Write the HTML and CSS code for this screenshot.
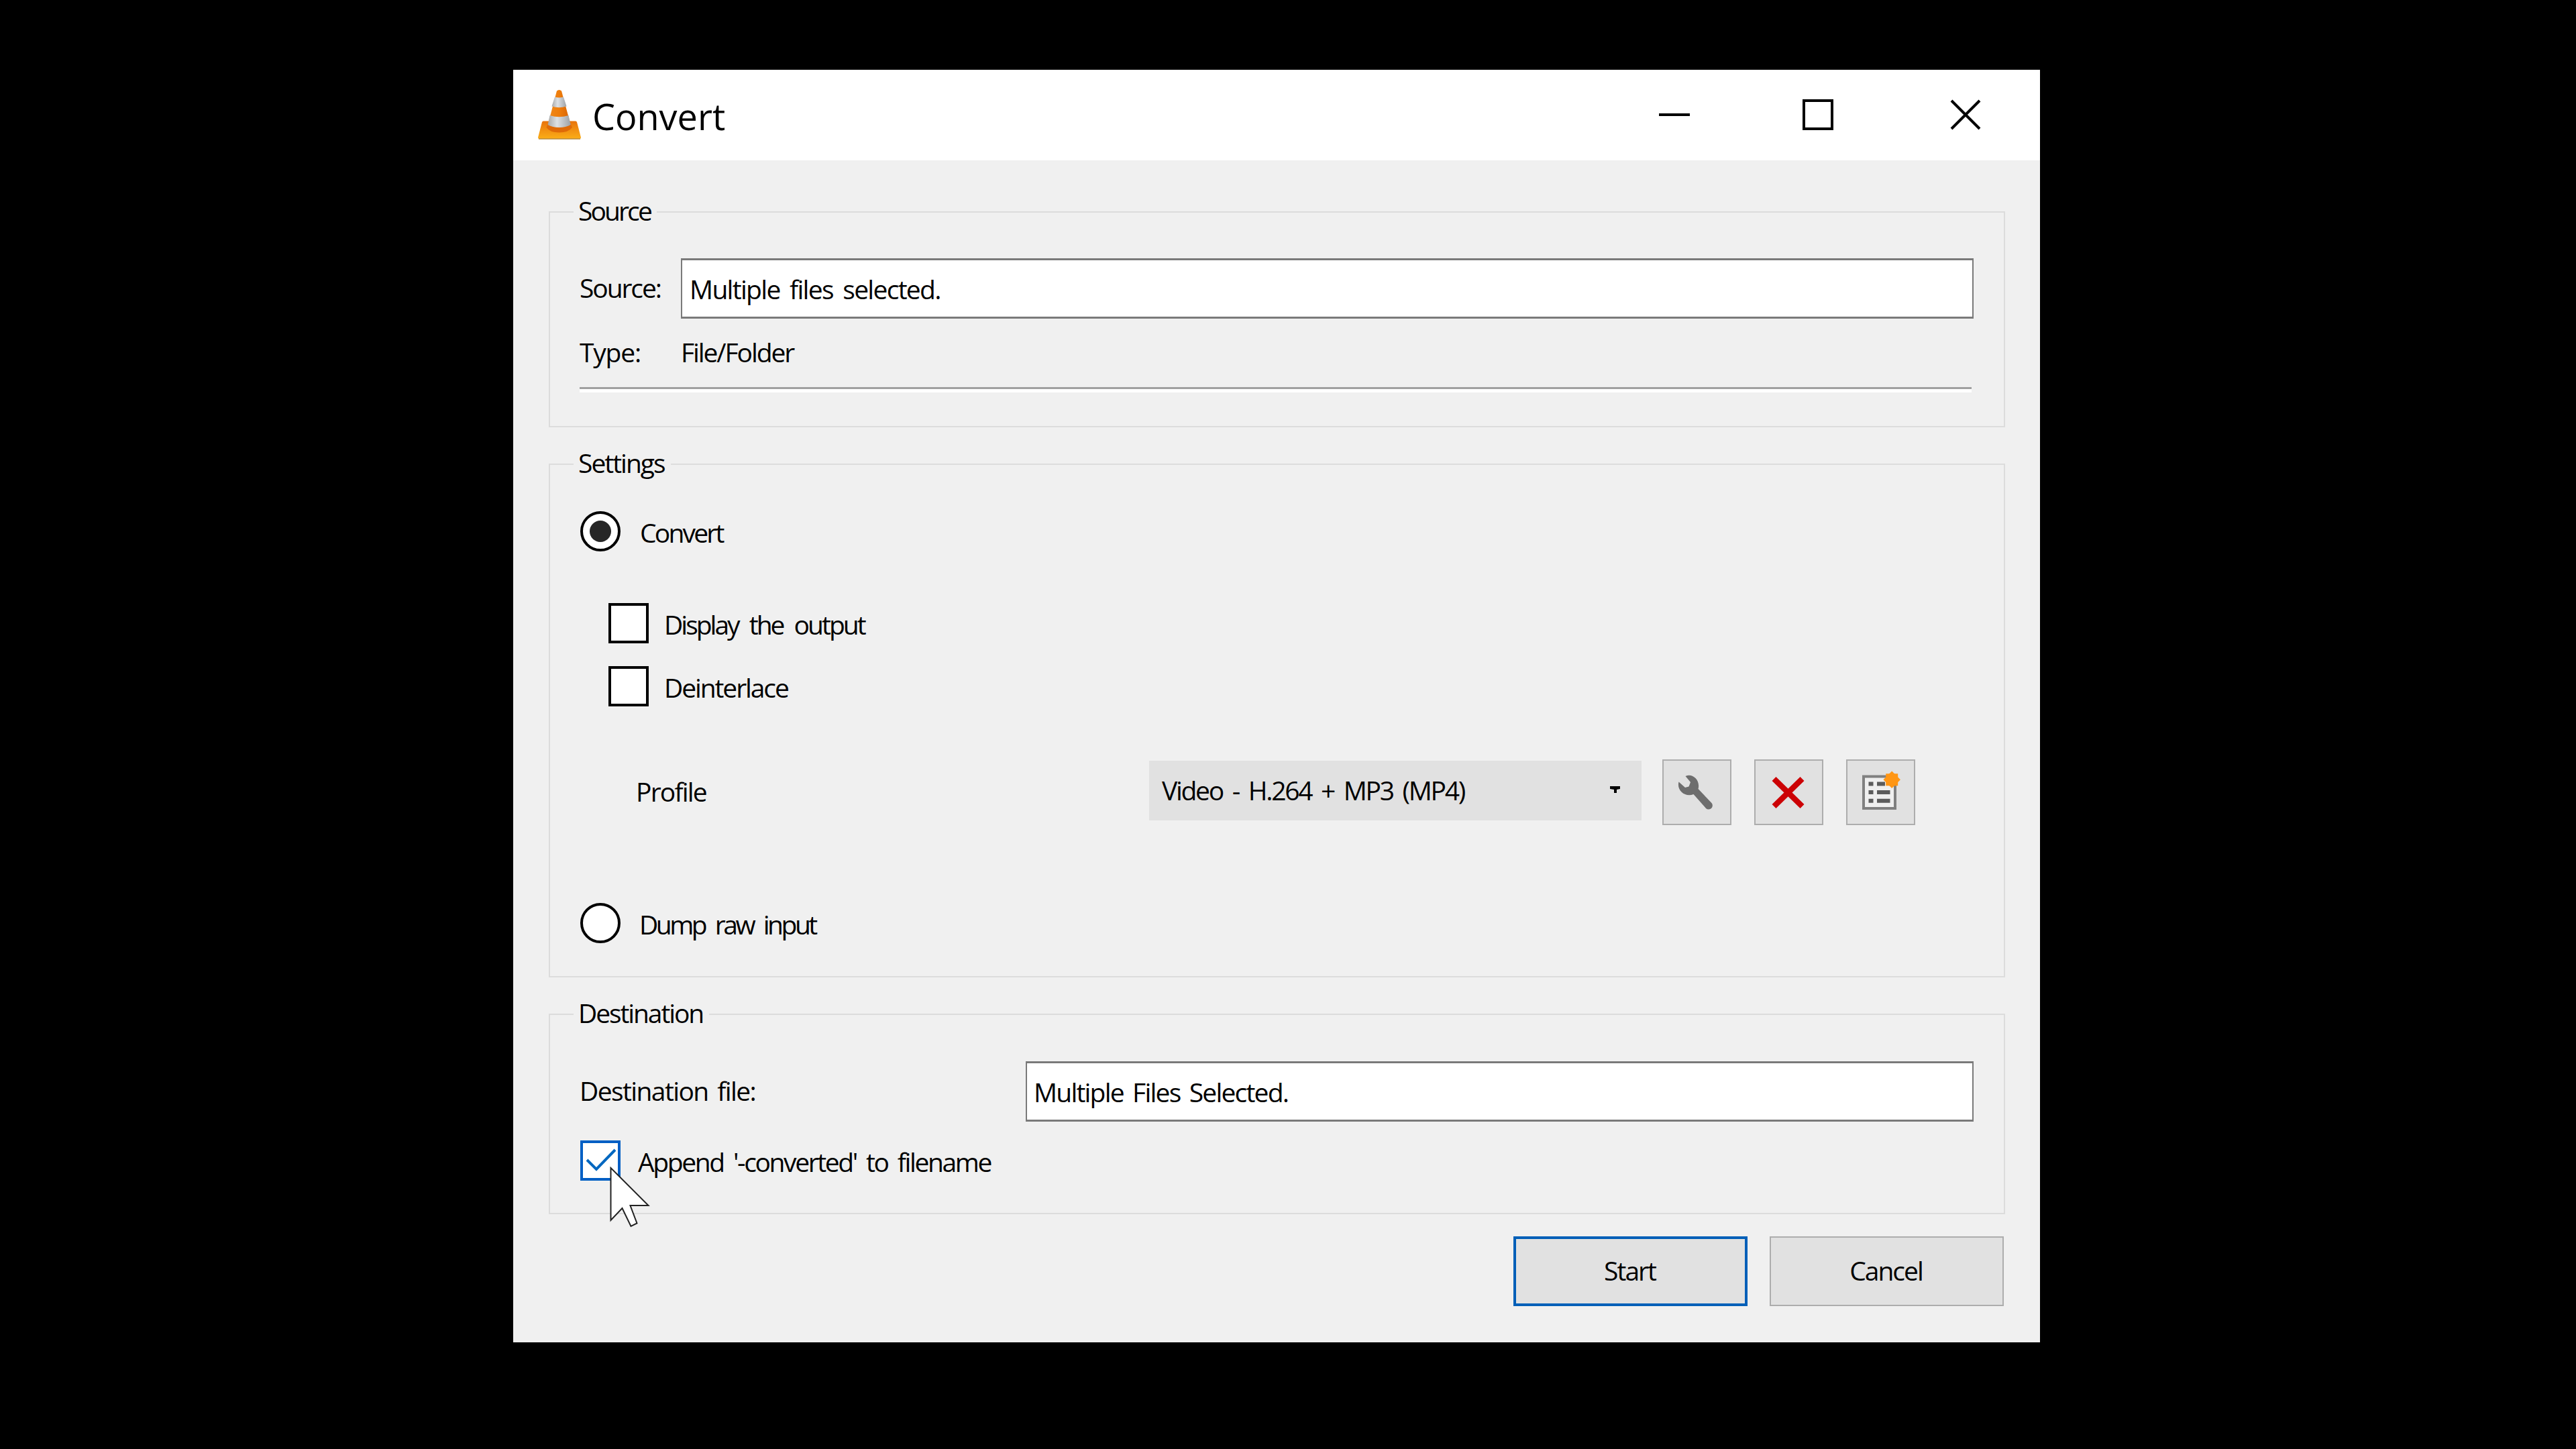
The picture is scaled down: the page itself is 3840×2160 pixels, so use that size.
FILE: index.html
```html
<!DOCTYPE html>
<html lang="en">
  <head>
    <meta charset="UTF-8" />
    <meta name="viewport" content="width=device-width, initial-scale=1.0" />
    <title>Convert</title>
    <link rel="stylesheet" href="styles.css" />
  </head>
  <body>
    <div class="window">
      <header class="titlebar">
        <svg class="app-icon" viewBox="0 0 64 75">
          <defs>
            <linearGradient id="base" x1="0" y1="0" x2="0" y2="1">
              <stop offset="0" stop-color="#e8730c" />
              <stop offset="1" stop-color="#fbae17" />
            </linearGradient>
            <linearGradient id="orange" x1="0" y1="0" x2="1" y2="0">
              <stop offset="0" stop-color="#f08a1c" />
              <stop offset="0.5" stop-color="#ee7d0c" />
              <stop offset="1" stop-color="#d66205" />
            </linearGradient>
            <linearGradient id="white" x1="0" y1="0" x2="1" y2="0">
              <stop offset="0" stop-color="#a8a8a8" />
              <stop offset="0.4" stop-color="#dde1e5" />
              <stop offset="1" stop-color="#9da1a6" />
            </linearGradient>
          </defs>
          <path d="M8 47.500h48q1.500 0 2 1.500l6 23q0 2-2 2H2q-2 0-2-2l6-23q.5-1.500 2-1.500z" fill="url(#base)" />
          <path d="M1 74h62" stroke="#b98a3c" stroke-width="1.500" />
          <path d="M14.700 52L12.500 57q5 7.500 19 7.500t19.500-7.500L48.700 52z" fill="#df6a08" />
          <path d="M28 2.500q3.500-3 7 0L48.700 53q-7 4-17 4t-17-4z" fill="url(#orange)" />
          <path d="M25 11.500q6.500 2 13 0l4.500 14q-11 3.500-22 0z" fill="url(#white)" />
          <path d="M17.500 39q14 4.500 28 0l3.200 14q-7 4-17 4t-17-4z" fill="url(#white)" />
        </svg>
        <h1 class="title">Convert</h1>
        <div class="window-buttons">
          <svg class="window-button" viewBox="0 0 46 46"><path d="M0 23h46" /></svg>
          <svg class="window-button" viewBox="0 0 46 46"><path d="M2 2h42v42H2z" /></svg>
          <svg class="window-button close" viewBox="0 0 46 46"><path d="M2 2l42 42M44 2L2 44" /></svg>
        </div>
      </header>

      <main class="content">
        <section class="group source">
          <h2 class="group-title">Source</h2>
          <div class="field-row">
            <label class="label" for="source">Source:</label>
            <input class="text-input" id="source" type="text" value="Multiple files selected." />
          </div>
          <div class="type-row">
            <span class="label type">Type:</span>
            <span class="type-value">File/Folder</span>
          </div>
          <div class="separator"></div>
        </section>

        <section class="group settings">
          <h2 class="group-title settings-title">Settings</h2>
          <label class="option convert">
            <input class="radio" type="radio" name="mode" checked />
            <span class="option-text">Convert</span>
          </label>
          <label class="option display">
            <input class="checkbox" type="checkbox" />
            <span class="option-text">Display the output</span>
          </label>
          <label class="option deinterlace">
            <input class="checkbox" type="checkbox" />
            <span class="option-text">Deinterlace</span>
          </label>
          <div class="profile-row">
            <span class="profile-label">Profile</span>
            <div class="combo">
              <span class="combo-text">Video - H.264 + MP3 (MP4)</span>
              <svg class="combo-arrow" viewBox="0 0 15 11"><path d="M0 0h15v4l-5 1v5H6V5L0 4z" /></svg>
            </div>
            <button class="icon-button" type="button" aria-label="Edit profile">
              <svg viewBox="2 2 99 94">
                <path fill="#6e6e6e" d="M34.500 25C45 20 57 31 53.500 44L73 64.500a5.500 5.500 0 0 1-8 8.500L46.500 52C34 57 21 46 24.500 33.500L34 42l5.500-1.500L42 34z" />
              </svg>
            </button>
            <button class="icon-button" type="button" aria-label="Delete profile">
              <svg viewBox="2 2 99 94">
                <path stroke="#cc0205" stroke-width="8.500" d="M29.500 29l42 41M71.500 29l-42 41" />
              </svg>
            </button>
            <button class="icon-button" type="button" aria-label="New profile">
              <svg viewBox="2 2 99 94">
                <path fill="#efefef" stroke="#808080" stroke-width="4" d="M26 25.500h47v47.500H26z" />
                <path stroke="#5c5c5c" stroke-width="6" d="M33.500 36.500h7M46 36.500h12M33.500 49h7M46 49h19.500M33.500 61.700h7M46 61.700h19.500" />
                <g fill="#ff9614" transform="translate(68.200 30.300)">
                  <rect x="-9" y="-9" width="18" height="18" />
                  <rect x="-9" y="-9" width="18" height="18" transform="rotate(45)" />
                </g>
              </svg>
            </button>
          </div>
          <label class="option dump">
            <input class="radio" type="radio" name="mode" />
            <span class="option-text">Dump raw input</span>
          </label>
        </section>

        <section class="group destination">
          <h2 class="group-title">Destination</h2>
          <div class="field-row">
            <label class="label destination-label" for="destination">Destination file:</label>
            <input class="text-input destination-input" id="destination" type="text" value="Multiple Files Selected." />
          </div>
          <label class="option append">
            <input class="checkbox checked" type="checkbox" checked />
            <svg class="tick" viewBox="0 0 60 60"><path d="M10 29l14 14 28-29" /></svg>
            <span class="option-text">Append '-converted' to filename</span>
            <svg class="cursor" viewBox="0 0 60 92">
              <path d="M1.500 2v78l17-18 13 27 9-4.500-10-26.500h27z" />
            </svg>
          </label>
        </section>

        <footer class="actions">
          <button class="button default" type="button">Start</button>
          <button class="button" type="button">Cancel</button>
        </footer>
      </main>
    </div>
  </body>
</html>
```
FILE: styles.css
```css
* {
  box-sizing: border-box;
}

body {
  margin: 0;
  width: 3840px;
  height: 2160px;
  padding: 104px 0 0 765px;
  background-color: #000;
  font-family: "Open Sans", "Noto Sans", sans-serif;
  font-size: 39px;
  line-height: 50px;
  letter-spacing: -2.1px;
  color: #000;
  overflow: hidden;
}

.window {
  width: 2276px;
  height: 1897px;
  background-color: #f0f0f0;
}

/* title bar */
.titlebar {
  display: flex;
  align-items: center;
  height: 135px;
  padding: 0 88px 2px 37px;
  background-color: #fff;
}

.app-icon {
  width: 64px;
  height: 75px;
}

.title {
  margin: 0 0 0 17px;
  padding-top: 4px;
  font-size: 54px;
  font-weight: normal;
  line-height: 70px;
  letter-spacing: 0;
}

.window-buttons {
  display: flex;
  gap: 168px;
  margin-left: auto;
}

.window-button {
  width: 46px;
  height: 46px;
  fill: none;
  stroke: #000;
  stroke-width: 4;
}

.close {
  margin-left: 6px;
}

.content {
  padding: 76px 52px 0 53px;
}

/* group boxes */
.group {
  border: 2px solid #dcdcdc;
  padding: 0 45px 0 44px;
}

.source {
  height: 322px;
}

.settings {
  height: 766px;
  margin-top: 54px;
}

.destination {
  height: 299px;
  margin-top: 54px;
}

.group-title {
  width: fit-content;
  margin: -23px 0 0 -9px;
  padding: 0 9px 0 7px;
  background-color: #f0f0f0;
  font-size: 39px;
  font-weight: normal;
  line-height: 40px;
}

.source .group-title {
  letter-spacing: -2.9px;
}

.settings .group-title {
  letter-spacing: -2px;
}

.field-row {
  display: flex;
  align-items: center;
  height: 90px;
  margin-top: 51px;
}

.destination .field-row {
  margin-top: 52px;
}

.label {
  width: 151px;
  padding-bottom: 2px;
  letter-spacing: -2.1px;
}

.text-input {
  flex: 1;
  height: 90px;
  padding: 1px 11px 0;
  border: 2px solid #7a7a7a;
  border-width: 3px 2px;
  background-color: #fff;
  font: inherit;
  letter-spacing: -1.7px;
  word-spacing: 6px;
  color: #000;
}

.type-row {
  display: flex;
  margin-top: 25px;
}

.type {
  padding: 0;
  letter-spacing: -1.2px;
}

.separator {
  height: 8px;
  margin: 27px 3px 0 0;
  border-top: 3px solid #a0a0a0;
  border-bottom: 5px solid #fff;
}

/* radio buttons and check boxes */
.option {
  position: relative;
  display: flex;
  align-items: center;
  width: fit-content;
  height: 60px;
}

.radio,
.checkbox {
  appearance: none;
  flex: none;
  width: 60px;
  height: 60px;
  margin: 0;
  border: 4px solid #000;
  background-color: #fff;
}

.radio {
  border-radius: 50%;
}

.radio:checked {
  display: grid;
  place-items: center;
}

.radio:checked::before {
  content: "";
  width: 32px;
  height: 32px;
  border-radius: 50%;
  background-color: #262626;
}

.option-text {
  margin-left: 28px;
  padding-top: 3px;
  white-space: nowrap;
}

.convert {
  margin: 52px 0 0 1px;
  letter-spacing: -2.8px;
}

.convert .option-text {
  margin-left: 29px;
}

.display {
  margin: 77px 0 0 43px;
  letter-spacing: -3px;
  word-spacing: 9px;
}

.deinterlace {
  margin: 34px 0 0 43px;
}

.display .option-text,
.deinterlace .option-text {
  margin-left: 23px;
}

.profile-row {
  display: flex;
  align-items: center;
  height: 98px;
  margin-top: 79px;
}

.profile-label {
  width: 765px;
  margin-left: 84px;
  padding-bottom: 2px;
  letter-spacing: -1.8px;
}

.combo {
  display: flex;
  align-items: center;
  justify-content: space-between;
  width: 734px;
  height: 89px;
  margin: 0 31px 5px 0;
  padding: 0 32px 2px 19px;
  background-color: #e1e1e1;
}

.combo-text {
  letter-spacing: -2.3px;
  word-spacing: 6px;
}

.combo-arrow {
  width: 15px;
  height: 11px;
}

.icon-button {
  width: 103px;
  height: 98px;
  margin-right: 34px;
  padding: 0;
  border: 2px solid #adadad;
  background-color: #e1e1e1;
}

.icon-button svg {
  display: block;
  width: 99px;
  height: 94px;
}

.dump {
  margin: 116px 0 0 1px;
  letter-spacing: -3.5px;
  word-spacing: 8px;
}

/* destination */
.destination-label {
  width: 665px;
  letter-spacing: -1.6px;
  word-spacing: 5px;
}

.destination-input {
  padding-left: 10px;
  letter-spacing: -1.8px;
  word-spacing: 5px;
}

.append {
  margin: 28px 0 0 1px;
  letter-spacing: -2.4px;
  word-spacing: 6.5px;
}

.append .option-text {
  margin-left: 26px;
}

.checked {
  border-color: #005fc4;
}

.tick {
  position: absolute;
  left: 0;
  top: 0;
  width: 60px;
  height: 60px;
  fill: none;
  stroke: #0067c0;
  stroke-width: 4;
}

.cursor {
  position: absolute;
  left: 44px;
  top: 39px;
  width: 60px;
  height: 92px;
  fill: #fff;
  stroke: #222;
  stroke-width: 2;
}

/* bottom buttons */
.actions {
  display: flex;
  justify-content: flex-end;
  gap: 33px;
  margin: 33px 2px 0 0;
}

.button {
  width: 349px;
  height: 104px;
  padding: 0 2px 2px 0;
  border: 2px solid #adadad;
  background-color: #e1e1e1;
  font: inherit;
  letter-spacing: -2px;
  color: #000;
}

.default {
  border: 4px solid #005fb8;
}
```
